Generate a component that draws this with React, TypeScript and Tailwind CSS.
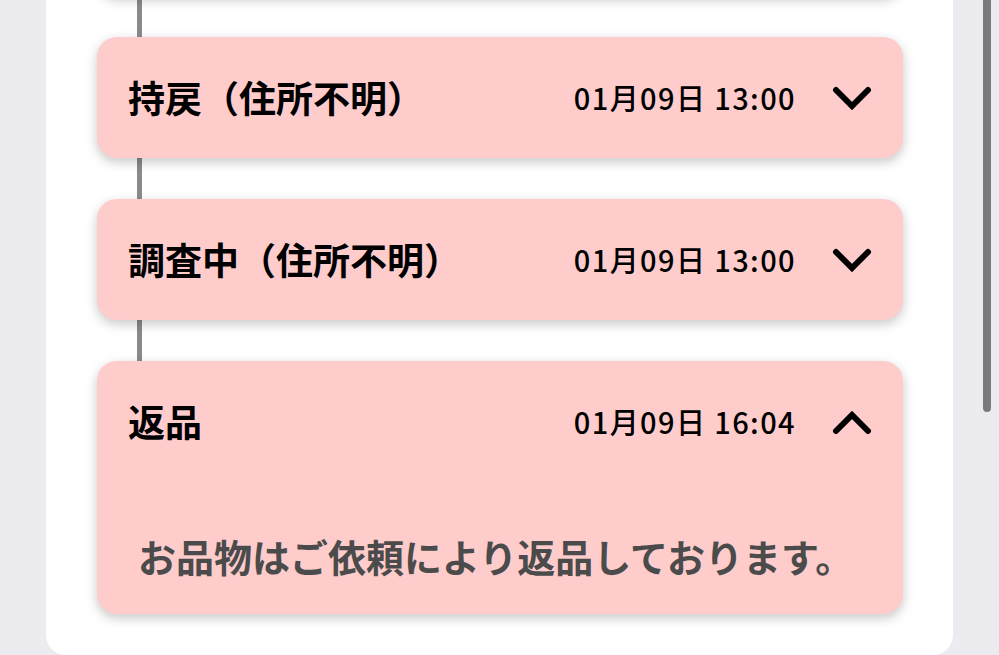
import React from "react";

const font = { fontFamily: '"Noto Sans CJK JP", "Noto Sans", sans-serif' };

type Item = { title: string; time: string; open?: boolean; body?: string };

// the first entry sits above the visible area; only its bottom shadow shows
const items: Item[] = [
  { title: "", time: "" },
  { title: "持戻（住所不明）", time: "01月09日 13:00" },
  { title: "調査中（住所不明）", time: "01月09日 13:00" },
  { title: "返品", time: "01月09日 16:04", open: true, body: "お品物はご依頼により返品しております。" },
];

function Chevron({ up }: { up?: boolean }) {
  return (
    <svg width="40" height="26" viewBox="0 0 40 26" className="shrink-0">
      <path
        d={up ? "M4 22 L20 6 L36 22" : "M4 5 L20 21 L36 5"}
        fill="none"
        stroke="#000"
        strokeWidth="6"
        strokeLinecap="round"
        strokeLinejoin="miter"
      />
    </svg>
  );
}

function Card({ it }: { it: Item }) {
  return (
    <div className="rounded-[20px] bg-[#ffcccc] shadow-[0_4px_12px_rgba(0,0,0,0.22)]">
      <div className="flex h-[121px] items-center pl-[31px] pr-[31px]">
        <span className="flex-1 text-[37px] font-bold leading-none text-black">{it.title}</span>
        <span className="mr-[36px] text-[29px] font-medium leading-none tracking-[1.4px] text-black">{it.time}</span>
        {it.title && <Chevron up={it.open} />}
      </div>
      {it.open && (
        <div className="h-[132px] pl-[41px] pt-[49px] text-[38px] font-bold leading-[50px] text-[#4b4b4b]">
          {it.body}
        </div>
      )}
    </div>
  );
}

export default function App() {
  return (
    <div className="relative h-[655px] w-[999px] overflow-hidden bg-[#ebebf0]" style={font}>
      <div className="ml-[46px] h-[655px] w-[907px] overflow-hidden rounded-b-[20px] bg-white">
        <div className="relative mt-[-125px] pl-[51px] pr-[50px]">
          <div className="absolute bottom-[60px] left-[91px] top-0 w-[5px] bg-[#8a8a8a]" />
          <div className="relative flex flex-col gap-[41px]">
            {items.map((it, i) => (
              <Card key={i} it={it} />
            ))}
          </div>
        </div>
      </div>
      <div className="absolute right-[8px] top-0 h-[412px] w-[8px] rounded-b-full bg-[#7b797e]" />
    </div>
  );
}
